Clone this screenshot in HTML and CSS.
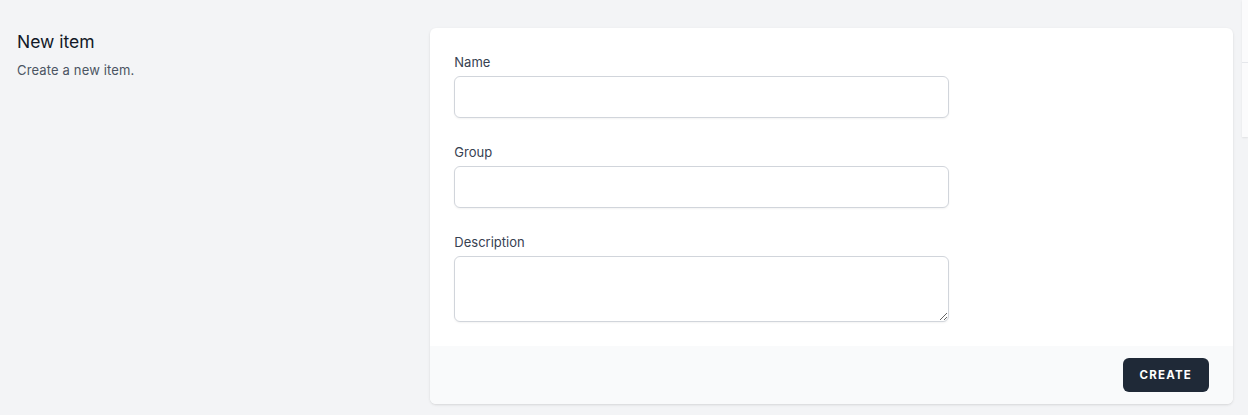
FILE: index.html
```html
<!DOCTYPE html>
<html lang="en">
<head>
<meta charset="utf-8">
<title>New item</title>
<link rel="stylesheet" href="styles.css">
</head>
<body>
<div class="page">
  <div class="form-section">
    <div class="section-title">
      <h3 class="title">New item</h3>
      <p class="subtitle">Create a new item.</p>
    </div>
    <form class="card">
      <div class="card-body">
        <div class="field">
          <label class="label" for="name">Name</label>
          <input class="input" id="name" type="text">
        </div>
        <div class="field">
          <label class="label" for="group">Group</label>
          <input class="input" id="group" type="text">
        </div>
        <div class="field">
          <label class="label" for="description">Description</label>
          <textarea class="input textarea" id="description" rows="2"></textarea>
        </div>
      </div>
      <div class="card-footer">
        <button class="btn" type="button">Create</button>
      </div>
    </form>
  </div>
  <div class="side-panel">
    <div class="side-head"></div>
  </div>
</div>
</body>
</html>
```

FILE: styles.css
```css
* { box-sizing: border-box; }
html, body {
  margin: 0;
  padding: 0;
  background: #f3f4f6;
  font-family: Inter, "Noto Sans", sans-serif;
  color: #111827;
  overflow: hidden;
}
.page {
  display: flex;
  align-items: flex-start;
  padding-left: 17px;
  width: 1248px;
  height: 415px;
}
.form-section {
  flex: 0 0 1216px;
  display: grid;
  grid-template-columns: repeat(3, 1fr);
  column-gap: 24px;
  padding-top: 28px;
}
.section-title { grid-column: span 1; }
.title {
  margin: 0;
  font-size: 17.5px;
  line-height: 28px;
  font-weight: 400;
  color: #111827;
}
.subtitle {
  margin: 4px 0 0;
  font-size: 13px;
  line-height: 20px;
  color: #4b5563;
  letter-spacing: 0.15px;
}
.card {
  grid-column: span 2;
  background: #fff;
  border-radius: 6px;
  box-shadow: 0 1px 3px 0 rgba(0,0,0,0.1), 0 1px 2px -1px rgba(0,0,0,0.1);
  overflow: hidden;
  margin: 0;
}
.card-body {
  padding: 24px;
  display: grid;
  grid-template-columns: repeat(6, 1fr);
  gap: 24px;
}
.field {
  grid-column: span 4;
  display: flex;
  flex-direction: column;
}
.label {
  font-size: 13px;
  line-height: 20px;
  font-weight: 400;
  color: #374151;
}
.input {
  margin-top: 4px;
  height: 42px;
  width: 100%;
  border: 1px solid #d1d5db;
  border-radius: 6px;
  box-shadow: 0 1px 2px 0 rgba(0,0,0,0.05);
  padding: 8px 12px;
  font-family: inherit;
  font-size: 16px;
  line-height: 24px;
  background: #fff;
}
.textarea {
  height: 66px;
  resize: vertical;
  display: block;
}
.card-footer {
  background: #f9fafb;
  padding: 12px 24px;
  display: flex;
  justify-content: flex-end;
}
.btn {
  height: 34px;
  padding: 8px 16px;
  background: #1f2937;
  color: #fff;
  border: 1px solid transparent;
  border-radius: 6px;
  font-family: inherit;
  font-size: 11.5px;
  line-height: 16px;
  font-weight: 700;
  text-transform: uppercase;
  letter-spacing: 1.2px;
}
.side-panel {
  flex: 0 0 6px;
  margin-left: 9px;
  height: 137px;
  background: #fbfbfc;
  box-shadow: 0 1px 2px rgba(0,0,0,0.08);
}
.side-head {
  height: 63px;
  border-bottom: 1px solid #e5e7eb;
}
```
